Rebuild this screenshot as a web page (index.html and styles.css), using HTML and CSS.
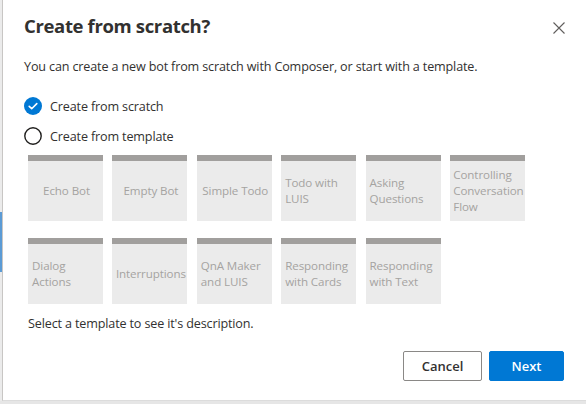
FILE: index.html
```html
<!DOCTYPE html>
<html>
<head>
<meta charset="utf-8">
<link rel="stylesheet" href="styles.css">
</head>
<body>
<div class="screen">
  <div class="backdrop-strip">
    <div class="strip-accent"></div>
  </div>
  <div class="dialog">
    <div class="header">
      <h1 class="title">Create from scratch?</h1>
      <button class="close" aria-label="Close">
        <svg width="12" height="12" viewBox="0 0 12 12"><path d="M0.5 0.5L11.5 11.5M11.5 0.5L0.5 11.5" stroke="#605e5c" stroke-width="1.1" fill="none"/></svg>
      </button>
    </div>
    <p class="subtitle">You can create a new bot from scratch with Composer, or start with a template.</p>
    <div class="radios">
      <label class="radio">
        <svg class="radio-icon" width="18" height="18" viewBox="0 0 18 18"><circle cx="9" cy="9" r="9" fill="#0078d4"/><path d="M5.2 9.3L7.7 11.7L12.8 6.6" stroke="#fff" stroke-width="1.6" fill="none" stroke-linecap="round" stroke-linejoin="round"/></svg>
        <span>Create from scratch</span>
      </label>
      <label class="radio">
        <svg class="radio-icon" width="18" height="18" viewBox="0 0 18 18"><circle cx="9" cy="9" r="8.2" fill="#fff" stroke="#201f1e" stroke-width="1.4"/></svg>
        <span>Create from template</span>
      </label>
    </div>
    <div class="tiles">
      <div class="tile"><span>Echo Bot</span></div>
      <div class="tile"><span>Empty Bot</span></div>
      <div class="tile"><span>Simple Todo</span></div>
      <div class="tile"><span>Todo with LUIS</span></div>
      <div class="tile"><span>Asking Questions</span></div>
      <div class="tile"><span>Controlling Conversation Flow</span></div>
      <div class="tile"><span>Dialog Actions</span></div>
      <div class="tile"><span>Interruptions</span></div>
      <div class="tile"><span>QnA Maker and LUIS</span></div>
      <div class="tile"><span>Responding with Cards</span></div>
      <div class="tile"><span>Responding with Text</span></div>
    </div>
    <p class="hint">Select a template to see it's description.</p>
    <div class="footer">
      <button class="btn btn-default">Cancel</button>
      <button class="btn btn-primary">Next</button>
    </div>
  </div>
</div>
<div class="bottom-strip"></div>
</body>
</html>
```

FILE: styles.css
```css
* { box-sizing: border-box; }
html, body {
  margin: 0;
  padding: 0;
  width: 586px;
  height: 404px;
  overflow: hidden;
  background: #f0f0f0;
  font-family: "Open Sans", "Noto Sans", sans-serif;
  color: #323130;
}
.screen {
  display: flex;
  height: 401px;
}
.backdrop-strip {
  width: 2px;
  background: #ebebeb;
  padding-top: 212px;
}
.strip-accent {
  width: 2px;
  height: 60px;
  background: #5b9bd5;
}
.dialog {
  flex: 1;
  background: #fff;
  border-left: 1px solid #c8c6c4;
  border-bottom: 1px solid #dcdcdc;
  padding: 12px 22px 20px 21px;
  display: flex;
  flex-direction: column;
}
.header {
  display: flex;
  align-items: center;
  justify-content: space-between;
  height: 28px;
}
.title {
  margin: 0;
  font-size: 18.5px;
  font-weight: 700;
  line-height: 28px;
  color: #323130;
  letter-spacing: -0.35px;
}
.close {
  border: 0;
  background: none;
  padding: 0;
  width: 12px;
  height: 12px;
  display: flex;
  margin-top: 3px;
  margin-right: -1px;
}
.subtitle {
  margin: 17px 0 0;
  font-size: 12.6px;
  line-height: 20px;
  letter-spacing: -0.15px;
}
.radios {
  margin-top: 14px;
  display: flex;
  flex-direction: column;
}
.radio {
  display: flex;
  align-items: center;
  height: 30px;
  font-size: 12.6px;
  letter-spacing: -0.15px;
  gap: 8px;
}
.radio-icon {
  flex: none;
}
.tiles {
  margin: 4px 0 0 4px;
  display: grid;
  grid-template-columns: repeat(6, 75px);
  column-gap: 9.4px;
  row-gap: 17px;
}
.tile {
  height: 66px;
  background: #ebebeb;
  border-top: 6px solid #a19f9d;
  display: flex;
  align-items: center;
  justify-content: center;
  padding: 0 2px 0 4px;
  color: #a5a3a1;
  font-size: 11.6px;
  line-height: 16px;
  letter-spacing: -0.1px;
}
.tile span {
  display: block;
}
.hint {
  margin: 10px 0 0 4px;
  font-size: 12.6px;
  line-height: 20px;
  letter-spacing: -0.15px;
}
.footer {
  margin-top: 17px;
  display: flex;
  justify-content: flex-end;
  gap: 7px;
}
.btn {
  height: 30px;
  border-radius: 2px;
  font-family: inherit;
  font-size: 13px;
  font-weight: 600;
  padding: 0;
}
.btn-default {
  width: 79px;
  background: #fff;
  border: 1px solid #8a8886;
  color: #323130;
}
.btn-primary {
  width: 75px;
  background: #0078d4;
  border: 1px solid #0078d4;
  color: #fff;
}
.bottom-strip {
  height: 3px;
  background: #e6e6e6;
}
```
